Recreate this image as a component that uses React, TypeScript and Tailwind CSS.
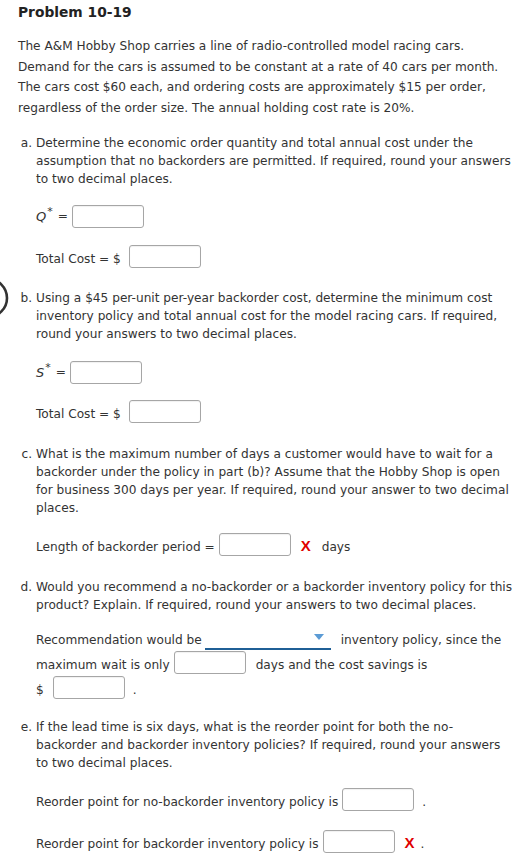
import React from 'react';

const font = { fontFamily: '"DejaVu Sans", Verdana, sans-serif' };

const Box = ({ w = 'w-[72px]' }: { w?: string }) => (
  <span
    className={`inline-block ${w} h-[23px] bg-white border border-[#a6a6a6] rounded-[3px] shadow-[inset_0_1px_1px_rgba(0,0,0,0.06)]`}
  />
);

const Wrong = () => (
  <span className="text-[#e00000] font-bold text-[15px] leading-none" style={{ fontFamily: '"Liberation Sans", Arial, sans-serif' }}>
    X
  </span>
);

const Question = ({ label, children, className = '' }: { label: string; children: React.ReactNode; className?: string }) => (
  <div className={`flex leading-[18px] ${className}`}>
    <span className="w-[18px] shrink-0 text-right pr-[4px]">{label}</span>
    <p className="flex-1">{children}</p>
  </div>
);

const Row = ({ children, className = '' }: { children: React.ReactNode; className?: string }) => (
  <div className={`flex items-center h-[23px] pl-[18px] ${className}`}>{children}</div>
);

export default function App() {
  return (
    <div className="relative w-[520px] min-h-[868px] bg-white text-[#333] text-[12.15px] pl-[18px] pr-[7px]" style={font}>
      {/* pen mark on the left edge */}
      <svg className="absolute left-0 top-[276px]" width="12" height="44" viewBox="0 0 12 44">
        <circle cx="-12" cy="22" r="19" fill="none" stroke="#333" strokeWidth="2.6" />
      </svg>

      <h1 className="pt-[3px] leading-[18px] font-bold text-[13.8px] text-[#222]">Problem 10-19</h1>

      <p className="mt-[15px] leading-[20.7px]">
        The A&amp;M Hobby Shop carries a line of radio-controlled model racing cars. Demand for the cars is assumed to be
        constant at a rate of 40 cars per month. The cars cost $60 each, and ordering costs are approximately $15 per
        order, regardless of the order size. The annual holding cost rate is 20%.
      </p>

      <Question label="a." className="mt-[15px]">
        Determine the economic order quantity and total annual cost under the assumption that no backorders are
        permitted. If required, round your answers to two decimal places.
      </Question>
      <Row className="mt-[17px]">
        <span className="italic text-[13px]">
          Q<sup className="text-[11px] not-italic ml-[1px]">*</sup>
        </span>
        <span className="ml-[5px] mr-[4px]">=</span>
        <Box />
      </Row>
      <Row className="mt-[20px]">
        <span>Total Cost = $</span>
        <span className="ml-[8px]">
          <Box />
        </span>
      </Row>

      <Question label="b." className="mt-[18px]">
        Using a $45 per-unit per-year backorder cost, determine the minimum cost inventory policy and total annual cost for
        the model racing cars. If required, round your answers to two decimal places.
      </Question>
      <Row className="mt-[18px]">
        <span className="italic text-[13px]">
          S<sup className="text-[11px] not-italic ml-[1px]">*</sup>
        </span>
        <span className="ml-[5px] mr-[4px]">=</span>
        <Box />
      </Row>
      <Row className="mt-[19px]">
        <span>Total Cost = $</span>
        <span className="ml-[8px]">
          <Box />
        </span>
      </Row>

      <Question label="c." className="mt-[19px]">
        What is the maximum number of days a customer would have to wait for a backorder under the policy in part (b)?
        Assume that the Hobby Shop is open for business 300 days per year. If required, round your answer to two decimal
        places.
      </Question>
      <Row className="mt-[19px]">
        <span>Length of backorder period =</span>
        <span className="ml-[4px]">
          <Box />
        </span>
        <span className="ml-[10px]">
          <Wrong />
        </span>
        <span className="ml-[11px]">days</span>
      </Row>

      <Question label="d." className="mt-[19px]">
        Would you recommend a no-backorder or a backorder inventory policy for this product? Explain. If required, round
        your answers to two decimal places.
      </Question>
      <div className="mt-[14px] pl-[18px]">
        <div className="flex items-center h-[25px]">
          <span>Recommendation would be</span>
          <span className="ml-[3px] relative w-[126px] h-[20px] border-b-2 border-[#1f5f96]">
            <svg className="absolute right-[7px] top-[4px]" width="10" height="6" viewBox="0 0 10 6">
              <path d="M0 0 L10 0 L5 6 Z" fill="#5b9bd5" />
            </svg>
          </span>
          <span className="ml-[10px]">inventory policy, since the</span>
        </div>
        <div className="flex items-center h-[25px]">
          <span>maximum wait is only</span>
          <span className="ml-[4px]">
            <Box />
          </span>
          <span className="ml-[10px]">days and the cost savings is</span>
        </div>
        <div className="flex items-center h-[25px]">
          <span>$</span>
          <span className="ml-[9px]">
            <Box />
          </span>
          <span className="ml-[8px]">.</span>
        </div>
      </div>

      <Question label="e." className="mt-[15px]">
        If the lead time is six days, what is the reorder point for both the no-
        <br />
        backorder and backorder inventory policies? If required, round your answers to two decimal places.
      </Question>
      <Row className="mt-[19px]">
        <span>Reorder point for no-backorder inventory policy is</span>
        <span className="ml-[4px]">
          <Box />
        </span>
        <span className="ml-[8px]">.</span>
      </Row>
      <Row className="mt-[19px]">
        <span>Reorder point for backorder inventory policy is</span>
        <span className="ml-[4px]">
          <Box />
        </span>
        <span className="ml-[10px]">
          <Wrong />
        </span>
        <span className="ml-[6px]">.</span>
      </Row>
    </div>
  );
}
